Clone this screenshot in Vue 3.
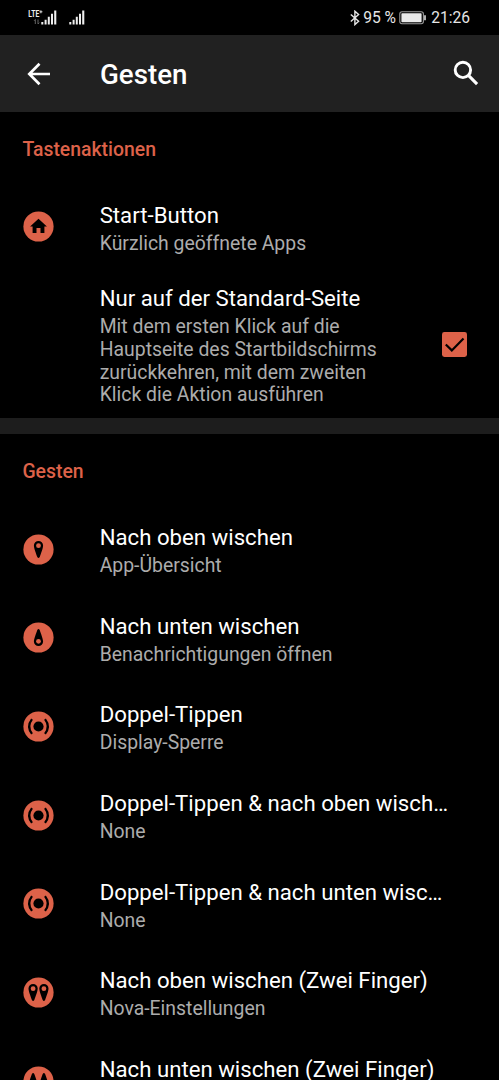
<script setup>
const buttonActions = [
  { icon: 'home', title: 'Start-Button', summary: 'Kürzlich geöffnete Apps' },
]

const gestures = [
  { icon: 'up', title: 'Nach oben wischen', summary: 'App-Übersicht' },
  { icon: 'down', title: 'Nach unten wischen', summary: 'Benachrichtigungen öffnen' },
  { icon: 'tap', title: 'Doppel-Tippen', summary: 'Display-Sperre' },
  { icon: 'tap', title: 'Doppel-Tippen & nach oben wischen', summary: 'None' },
  { icon: 'tap', title: 'Doppel-Tippen & nach unten wischen', summary: 'None' },
  { icon: 'up2', title: 'Nach oben wischen (Zwei Finger)', summary: 'Nova-Einstellungen' },
  { icon: 'down2', title: 'Nach unten wischen (Zwei Finger)', summary: '' },
]

const sections = [
  { name: 'Tastenaktionen', rows: buttonActions, hasOption: true },
  { name: 'Gesten', rows: gestures, hasOption: false },
]
</script>

<template>
  <div class="screen">
    <div class="status">
      <div class="status-left">
        <svg width="60" height="20" viewBox="0 0 60 20">
          <text x="0.3" y="9" class="lte" textLength="11" lengthAdjust="spacingAndGlyphs">LTE</text>
          <path d="M11.4 3.8h3M12.9 2.3v3" stroke="#ddd" stroke-width="1" />
          <path d="M7.3 16v-4.5l-1.2 1.3M10 11.5V16l1.3-1.3" stroke="#666" stroke-width="1" fill="none" />
          <g fill="#eee">
            <path d="M13.3 14h2v2.5h-2zM16.6 11.7h2v4.8h-2zM19.8 8.8h2v7.7h-2zM23 5.8h2v10.7h-2zM26.2 2.4h2.1v14.1h-2.1z" />
            <path d="M41.3 14h2v2.5h-2zM44.6 11.7h2v4.8h-2zM47.8 8.8h2v7.7h-2zM51 5.8h2v10.7h-2zM54.2 2.4h2.1v14.1h-2.1z" />
          </g>
        </svg>
      </div>
      <div class="status-right">
        <svg class="bt" width="10" height="16" viewBox="0 0 10 16" fill="none" stroke="#e6e6e6" stroke-width="1.4">
          <path d="M.8 4.4 8.6 11.3 4.9 14.6V1.2L8.6 4.6.8 11.6" />
        </svg>
        <span class="percent">95 %</span>
        <svg class="battery" width="28" height="14" viewBox="0 0 28 14">
          <rect x=".8" y=".8" width="23.6" height="12" rx="2.2" fill="none" stroke="#999" stroke-width="1.1" />
          <rect x="2.4" y="2.3" width="20.2" height="9" rx=".7" fill="#e9e9e9" />
          <path d="M26 4.3v5" stroke="#ddd" stroke-width="1.6" />
        </svg>
        <span class="clock">21:26</span>
      </div>
    </div>

    <header class="bar">
      <svg class="back" width="24" height="24" viewBox="0 0 24 24" fill="none" stroke="#fff" stroke-width="2.7">
        <path d="M23 12H3M12.5 1.8 2.3 12l10.2 10.2" />
      </svg>
      <h1>Gesten</h1>
      <svg class="search" width="26" height="26" viewBox="0 0 26 26" fill="none" stroke="#fff">
        <circle cx="9.9" cy="9.9" r="7.7" stroke-width="2.9" />
        <path d="m15.4 15.4 8.7 8.7" stroke-width="3.1" />
      </svg>
    </header>

    <section v-for="section in sections" :key="section.name">
      <h2>{{ section.name }}</h2>
      <div v-for="row in section.rows" :key="row.title" class="row">
        <svg class="icon" width="31" height="31" viewBox="-15.5 -15.5 31 31">
          <circle r="15.1" fill="#dd6249" />
          <path v-if="row.icon === 'home'" d="M0-7.8 8.4 0H5.9V6.6H2V1.5H-2V6.6H-5.9V0H-8.4Z" />
          <template v-else-if="row.icon === 'tap'">
            <circle r="5.1" />
            <path d="M-6.5-7.4Q-12.2 0-6.5 7.4M6.5-7.4Q12.2 0 6.5 7.4" fill="none" stroke="#000" stroke-width="2.2" />
          </template>
          <template v-else>
            <g
              v-for="x in row.icon.endsWith('2') ? [-5.4, 5.4] : [0]"
              :key="x"
              :transform="`translate(${x} 0) scale(1 ${row.icon.startsWith('down') ? -1 : 1})`"
            >
              <path d="M-4.6-4.1A4.6 4.4 0 0 1 4.6-4.1C4.6-1.5 2.4 4 1.2 7.5Q0 9.4-1.2 7.5C-2.4 4-4.6-1.5-4.6-4.1Z" />
              <circle cy="-3.8" r="2.4" fill="#dd6249" />
            </g>
          </template>
        </svg>
        <div class="text">
          <div class="title">{{ row.title }}</div>
          <div class="summary">{{ row.summary }}</div>
        </div>
      </div>
      <div v-if="section.hasOption" class="row option">
        <div class="text">
          <div class="title">Nur auf der Standard-Seite</div>
          <div class="summary">
            Mit dem ersten Klick auf die Hauptseite des Startbildschirms zurückkehren, mit dem zweiten Klick die Aktion ausführen
          </div>
        </div>
        <svg class="check" width="25" height="25" viewBox="0 0 25 25">
          <rect width="25" height="25" rx="2.4" fill="#dd6249" />
          <path d="m3.8 12.5 6 5.9L21.5 6.6" fill="none" stroke="#000" stroke-width="2.2" />
        </svg>
      </div>
      <div v-if="section.hasOption" class="divider"></div>
    </section>
  </div>
</template>

<style>
body {
  background: #000;
}
</style>

<style scoped>
.screen {
  height: 1080px;
  overflow: hidden;
  background: #000;
  color: #fff;
  font-family: Roboto, "Liberation Sans", sans-serif;
}
.status {
  display: flex;
  justify-content: space-between;
  height: 35px;
  padding: 0 29px 0 28px;
  color: #e6e6e6;
}
.status-left {
  padding-top: 8px;
}
.lte {
  fill: #eee;
  font: 700 9.6px Roboto, sans-serif;
}
.status-right {
  display: flex;
  align-items: center;
  font-size: 15.6px;
}
.bt {
  margin-right: 3px;
}
.percent {
  width: 36px;
  white-space: nowrap;
}
.clock {
  margin-left: 4px;
}
.bar {
  display: flex;
  align-items: center;
  height: 77px;
  padding: 0 20.5px 0 27px;
  background: #212121;
}
.search {
  margin-bottom: 2px;
}
h1 {
  flex: 1;
  margin: 2px 0 0 49px;
  font-size: 27.7px;
  line-height: 32px;
  font-weight: 500;
}
h2 {
  box-sizing: border-box;
  height: 70.6px;
  margin: 0;
  padding: 25.6px 22px 0 22.4px;
  color: #dd6249;
  font-size: 19.4px;
  line-height: 23px;
  font-weight: 500;
}
.row {
  display: flex;
  align-items: center;
  height: 88.65px;
  padding-left: 23.4px;
}
.icon {
  flex: none;
  margin-right: 45.3px;
}
.text {
  width: 352px;
  padding-top: 3px;
}
.title {
  overflow: hidden;
  font-size: 22.2px;
  line-height: 26px;
  white-space: nowrap;
  text-overflow: ellipsis;
}
.summary {
  min-height: 22.6px;
  margin-top: 5.2px;
  color: #acacac;
  font-size: 19.4px;
  line-height: 22.6px;
}
.option {
  height: 146.7px;
  padding: 0 32px 0 99.7px;
  justify-content: space-between;
}
.option .text {
  width: 290px;
}
.divider {
  height: 16.5px;
  background: #1d1d1d;
}
</style>
